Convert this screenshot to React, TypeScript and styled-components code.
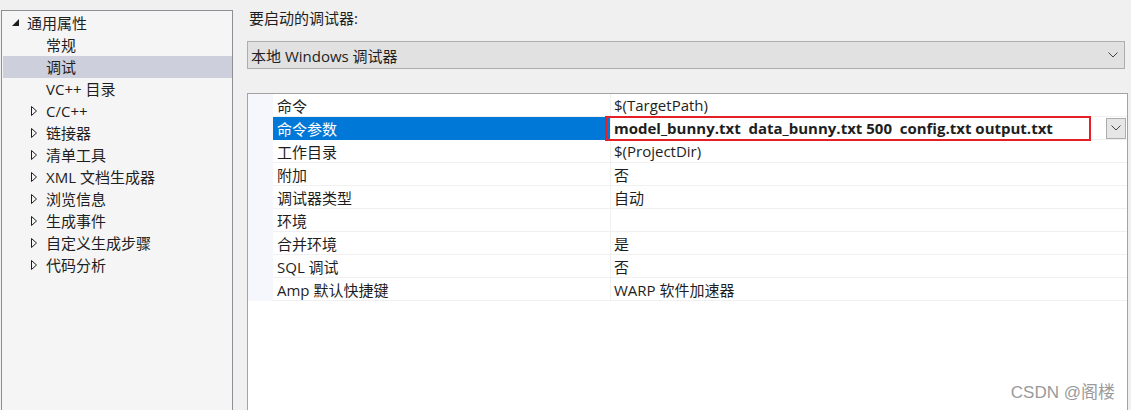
import styled, { createGlobalStyle } from 'styled-components'

const GlobalStyle = createGlobalStyle`
	html, body {
		margin: 0;
		padding: 0;
		background: #f0f0f0;
	}
	body {
		width: 1131px;
		height: 410px;
		overflow: hidden;
		font-family: "Open Sans", "Noto Sans CJK SC", sans-serif;
		font-size: 15px;
		color: #1e1e1e;
	}
`

const Page = styled.div`
	display: flex;
	align-items: flex-start;
	height: 410px;
	overflow: hidden;
`

const Tree = styled.ul`
	list-style: none;
	margin: 10px 0 0 1px;
	padding: 1px 0 0 1px;
	width: 229px;
	height: 398px;
	background: #f5f5f5;
	border: 1px solid #8e8f94;
	border-bottom: none;
	box-sizing: content-box;
`

const TreeRow = styled.li<{ $selected?: boolean; $indent: number }>`
	display: flex;
	align-items: center;
	height: 22px;
	padding-left: ${(p) => p.$indent}px;
	background: ${(p) => (p.$selected ? '#cdcfdc' : 'transparent')};
	line-height: 22px;
	white-space: nowrap;
`

const Arrow = styled.span`
	display: inline-flex;
	width: 15px;
	justify-content: flex-start;
`

const Side = styled.div`
	flex: 1;
	display: flex;
	flex-direction: column;
	padding-left: 14px;
	padding-right: 3px;
`

const Label = styled.div`
	height: 22px;
	line-height: 22px;
	margin-top: 7px;
	padding-left: 2px;
`

const Select = styled.div`
	margin-top: 12px;
	height: 26px;
	width: 867px;
	display: flex;
	align-items: center;
	justify-content: space-between;
	padding: 0 6px 0 3px;
	background: #e1e1e1;
	border: 1px solid #adadad;
`

const Grid = styled.div`
	margin-top: 24px;
	height: 316px;
	background: #fff;
	border: 1px solid #a3a3a3;
	border-bottom: none;
	position: relative;
`

const Row = styled.div`
	display: grid;
	grid-template-columns: 25px 338px 1fr;
	height: 23px;
`

const Gutter = styled.div`
	background: #f5f7fc;
`

const NameCell = styled.div<{ $selected?: boolean }>`
	display: flex;
	align-items: center;
	padding-left: 4px;
	background: ${(p) => (p.$selected ? '#0078d7' : '#fff')};
	color: ${(p) => (p.$selected ? '#fff' : '#1e1e1e')};
	border-bottom: 1px solid ${(p) => (p.$selected ? '#0078d7' : '#f0f0f0')};
	border-right: 1px solid #f0f0f0;
	white-space: nowrap;
`

const ValueCell = styled.div<{ $bold?: boolean }>`
	display: flex;
	align-items: center;
	justify-content: space-between;
	padding-left: 3px;
	border-bottom: 1px solid #f0f0f0;
	font-weight: ${(p) => (p.$bold ? 700 : 400)};
	white-space: pre;
	position: relative;
`

const Highlight = styled.div`
	position: absolute;
	left: -6px;
	top: -1px;
	width: 482px;
	height: 21px;
	border: 2px solid #e41f26;
	pointer-events: none;
`

const RowButton = styled.div`
	width: 20px;
	height: 21px;
	margin-right: 1px;
	display: flex;
	align-items: center;
	justify-content: center;
	background: #e6e6e6;
	border: 1px solid #adadad;
	box-sizing: border-box;
`

const Watermark = styled.div`
	position: absolute;
	right: 12px;
	top: 284px;
	font-family: "Liberation Sans", "Noto Sans CJK SC", sans-serif;
	font-size: 17px;
	color: #9a9a9a;
`

const Chevron = () => (
	<svg width="10" height="6" viewBox="0 0 10 6">
		<path d="M0.5 0.5 L5 5 L9.5 0.5" fill="none" stroke="#444" strokeWidth="1" />
	</svg>
)

const Expanded = () => (
	<svg width="8" height="8" viewBox="0 0 8 8">
		<polygon points="7,0 7,7 0,7" fill="#1e1e1e" />
	</svg>
)

const Collapsed = () => (
	<svg width="6" height="10" viewBox="0 0 6 10">
		<polygon points="0.5,0.5 5.5,5 0.5,9.5" fill="none" stroke="#1e1e1e" strokeWidth="1" />
	</svg>
)

const children: { label: string; expandable?: boolean; selected?: boolean }[] = [
	{ label: '常规' },
	{ label: '调试', selected: true },
	{ label: 'VC++ 目录' },
	{ label: 'C/C++', expandable: true },
	{ label: '链接器', expandable: true },
	{ label: '清单工具', expandable: true },
	{ label: 'XML 文档生成器', expandable: true },
	{ label: '浏览信息', expandable: true },
	{ label: '生成事件', expandable: true },
	{ label: '自定义生成步骤', expandable: true },
	{ label: '代码分析', expandable: true },
]

const props: { name: string; value: string }[] = [
	{ name: '命令', value: '$(TargetPath)' },
	{ name: '命令参数', value: 'model_bunny.txt  data_bunny.txt 500  config.txt output.txt' },
	{ name: '工作目录', value: '$(ProjectDir)' },
	{ name: '附加', value: '否' },
	{ name: '调试器类型', value: '自动' },
	{ name: '环境', value: '' },
	{ name: '合并环境', value: '是' },
	{ name: 'SQL 调试', value: '否' },
	{ name: 'Amp 默认快捷键', value: 'WARP 软件加速器' },
]

const App = () => (
	<>
		<GlobalStyle />
		<Page>
			<Tree>
				<TreeRow $indent={9}>
					<Arrow>
						<Expanded />
					</Arrow>
					通用属性
				</TreeRow>
				{children.map((c) => (
					<TreeRow key={c.label} $indent={28} $selected={c.selected}>
						<Arrow>{c.expandable && <Collapsed />}</Arrow>
						{c.label}
					</TreeRow>
				))}
			</Tree>
			<Side>
				<Label>要启动的调试器:</Label>
				<Select>
					<span>本地 Windows 调试器</span>
					<Chevron />
				</Select>
				<Grid>
					{props.map((p, i) => {
						const active = i === 1
						return (
							<Row key={p.name}>
								<Gutter />
								<NameCell $selected={active}>{p.name}</NameCell>
								<ValueCell $bold={active}>
									<span>{p.value}</span>
									{active && (
										<>
											<Highlight />
											<RowButton>
												<Chevron />
											</RowButton>
										</>
									)}
								</ValueCell>
							</Row>
						)
					})}
					<Watermark>CSDN @阁楼</Watermark>
				</Grid>
			</Side>
		</Page>
	</>
)

export default App
